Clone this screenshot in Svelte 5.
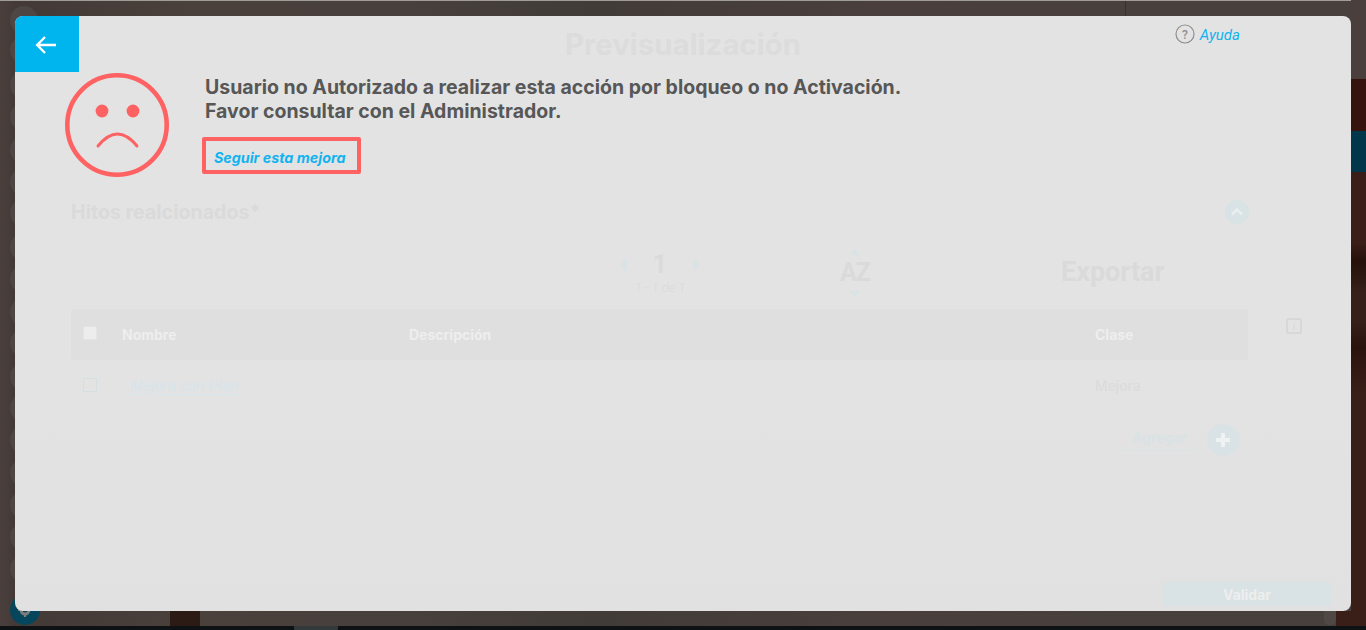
<script>
  const bubbles = [20, 50, 85, 117, 150, 182, 213, 247, 279, 312, 343, 377, 408, 440, 473, 505, 537, 569];
</script>

<div class="stage">
  <div class="backdrop" aria-hidden="true">
    <div class="topline"></div>
    <div class="divider"></div>
    {#each bubbles as y}
      <div class="bubble" style="top:{y - 14}px"></div>
    {/each}
    <div class="gear-badge">
      <svg viewBox="0 0 16 16" width="16" height="16"><circle cx="8" cy="8" r="4" fill="none" stroke="#7d7d7d" stroke-width="3" /><path d="M8 1v3M8 12v3M1 8h3M12 8h3" stroke="#7d7d7d" stroke-width="2" /></svg>
    </div>
    <div class="right-top"></div>
    <div class="right-red"></div>
    <div class="right-teal"></div>
    <div class="right-rest"></div>
    <div class="scroll-nub"></div>
    <div class="dark-col"></div>
    <div class="taskbar"><span class="task-item"></span></div>
  </div>

  <div class="modal">
    <header class="head">
      <button class="back" aria-label="Volver">
        <svg viewBox="0 0 24 20" width="24" height="20"><path d="M22 10H4M11 2 3.2 10l7.8 8" fill="none" stroke="#fff" stroke-width="2.4" /></svg>
      </button>
      <h1 class="ghost-title">Previsualización</h1>
      <div class="help">
        <svg viewBox="0 0 20 20" width="20" height="20"><circle cx="10" cy="10" r="9" fill="none" stroke="#8e8e8e" stroke-width="1.2" /><text x="10" y="14.5" text-anchor="middle" class="q">?</text></svg>
        <span>Ayuda</span>
      </div>
    </header>

    <section class="notice">
      <svg class="face" viewBox="0 0 104 104" width="104" height="104">
        <circle cx="52" cy="52" r="49.7" fill="none" stroke="#ff6262" stroke-width="4.6" />
        <circle cx="37" cy="38" r="6.4" fill="#ff6262" />
        <circle cx="68" cy="38" r="6.4" fill="#ff6262" />
        <path d="M33 73Q52.5 49 72 73" fill="none" stroke="#ff6262" stroke-width="3" stroke-linecap="round" />
      </svg>
      <div class="notice-body">
        <p>Usuario no Autorizado a realizar esta acción por bloqueo o no Activación.<br />Favor consultar con el Administrador.</p>
        <a class="follow" href="#follow">Seguir esta mejora</a>
      </div>
    </section>

    <div class="content">
      <section class="panel">
        <div class="panel-head">
          <h2>Hitos realcionados*</h2>
          <span class="collapse">
            <svg viewBox="0 0 24 24" width="24" height="24"><path d="M7 14.5 12 9.5l5 5" fill="none" stroke="#e9eeef" stroke-width="2.6" /></svg>
          </span>
        </div>
        <div class="toolbar">
          <div class="pager">
            <div class="pager-main"><i class="tri left"></i><b>1</b><i class="tri right"></i></div>
            <em>1 - 1 de 1</em>
          </div>
          <div class="sorter"><i class="tri up"></i><b>AZ</b><i class="tri down"></i></div>
          <div class="export">Exportar</div>
        </div>
        <div class="grid-row grid-head">
          <span class="check filled"></span>
          <span>Nombre</span>
          <span>Descripción</span>
          <span>Clase</span>
        </div>
        <div class="grid-row grid-body">
          <span class="check"></span>
          <a href="#plan">Mejora con Plan</a>
          <span></span>
          <span>Mejora</span>
        </div>
        <div class="add-row">
          <span class="add-label">Agregar</span>
          <span class="add-btn">
            <svg viewBox="0 0 32 32" width="32" height="32"><path d="M16 9v14M9 16h14" stroke="#eef2f3" stroke-width="4" /></svg>
          </span>
        </div>
      </section>
      <span class="info">i</span>
    </div>

    <footer class="foot">
      <button class="validate">Validar</button>
    </footer>
  </div>
</div>

<style>
  :global(body) {
    margin: 0;
    background: #0f1214;
  }
  .stage {
    position: relative;
    width: 1366px;
    height: 630px;
    box-sizing: border-box;
    padding: 16px 15px 19px;
    overflow: hidden;
    font-family: Inter, "Liberation Sans", sans-serif;
    background: linear-gradient(90deg, #4a3f3d 0, #433a37 15px, #4a403c 200px, #47403c 400px, #423c39 600px, #4a3f3c 900px, #48403d 1100px, #47403d 1366px);
  }
  .backdrop {
    position: absolute;
    inset: 0;
  }
  .topline {
    height: 1px;
    background: #a09c9a;
  }
  .divider {
    position: absolute;
    left: 1125px;
    top: 1px;
    width: 1px;
    height: 15px;
    background: #36302e;
  }
  .bubble {
    position: absolute;
    left: 10px;
    width: 28px;
    height: 28px;
    border-radius: 50%;
    background: #4e4644;
  }
  .gear-badge {
    position: absolute;
    left: 10px;
    top: 595px;
    width: 30px;
    height: 30px;
    border-radius: 50%;
    background: #05465c;
    display: flex;
    align-items: center;
    justify-content: center;
  }
  .right-top,
  .right-red,
  .right-teal,
  .right-rest {
    position: absolute;
    left: 1351px;
    width: 15px;
  }
  .right-top {
    top: 0;
    height: 79px;
    background: #4a3f3c;
  }
  .right-red {
    top: 79px;
    height: 52px;
    background: #36130d;
  }
  .right-teal {
    top: 131px;
    height: 41px;
    background: #02364a;
  }
  .right-rest {
    top: 172px;
    height: 454px;
    background: linear-gradient(180deg, #3b1e18 0, #3b1e18 70px, #25100a 90px, #37201a 120px, #38201a 150px, #2b130d 175px, #3a1f18 220px, #3a1f18 454px);
  }
  .scroll-nub {
    position: absolute;
    left: 1324px;
    top: 611px;
    width: 12px;
    height: 14px;
    border-radius: 0 0 5px 5px;
    background: #4f4845;
  }
  .dark-col {
    position: absolute;
    left: 170px;
    top: 611px;
    width: 30px;
    height: 15px;
    background: #2c1a15;
  }
  .backdrop::after {
    content: "";
    position: absolute;
    left: 1336px;
    top: 611px;
    width: 30px;
    height: 15px;
    background: #3a1f18;
  }
  .taskbar {
    position: absolute;
    left: 0;
    right: 0;
    top: 626px;
    height: 4px;
    background: #0f1214;
  }
  .task-item {
    display: block;
    margin-left: 294px;
    width: 44px;
    height: 4px;
    background: #33383b;
  }

  .modal {
    position: relative;
    height: 595px;
    display: flex;
    flex-direction: column;
    border-radius: 8px;
    overflow: hidden;
    background: linear-gradient(180deg, #e3e3e3 0, #e3e3e3 60%, #e1e1e1 100%);
  }
  .head {
    display: grid;
    grid-template-columns: 1fr auto 1fr;
    height: 56px;
  }
  .back {
    width: 64px;
    height: 56px;
    padding: 2px 2px 0 0;
    border: 0;
    background: #00b5ee;
    display: flex;
    align-items: center;
    justify-content: center;
  }
  .ghost-title {
    margin: 0;
    align-self: center;
    font-size: 29.4px;
    font-weight: 700;
    color: #dcdcdc;
  }
  .help {
    justify-self: end;
    display: flex;
    gap: 5px;
    align-items: center;
    height: 20px;
    margin-top: 8px;
    padding-right: 111px;
    font: italic 400 15px Roboto, sans-serif;
    color: #10b3ef;
  }
  .help span {
    margin-top: 1px;
  }
  .q {
    font: 500 12px Roboto, sans-serif;
    fill: #8e8e8e;
  }

  .notice {
    display: flex;
    gap: 36px;
    margin-top: 1px;
    padding-left: 50px;
    height: 104px;
  }
  .notice-body {
    display: flex;
    flex-direction: column;
    align-items: flex-start;
  }
  .notice p {
    margin: 2px 0 0;
    font-size: 19.5px;
    line-height: 24px;
    font-weight: 700;
    color: #575757;
    white-space: nowrap;
  }
  .follow {
    margin: 14px 0 0 -3px;
    box-sizing: border-box;
    width: 159px;
    height: 37px;
    padding-left: 8px;
    border: 4px solid #ff6262;
    border-radius: 2px;
    font-size: 14.3px;
    font-weight: 700;
    font-style: italic;
    line-height: 34px;
    color: #13b3ef;
    text-decoration: none;
  }

  .content {
    display: flex;
    margin: 9px 0 0 35px;
    gap: 17px;
    align-items: flex-start;
  }
  .panel {
    box-sizing: border-box;
    width: 1219px;
    height: 281px;
    flex: none;
    border: 1px solid #e2e2e2;
    border-radius: 4px;
  }
  .panel-head {
    display: flex;
    align-items: center;
    justify-content: space-between;
    height: 50px;
    padding: 0 19px 0 20px;
    border-bottom: 1px solid #e2e2e2;
  }
  .panel-head h2 {
    margin: 0;
    font-size: 19.6px;
    font-weight: 700;
    color: #dadada;
  }
  .collapse {
    width: 24px;
    height: 24px;
    border-radius: 50%;
    background: #d9e2e4;
    display: block;
  }
  .toolbar {
    display: flex;
    align-items: flex-start;
    height: 71px;
    padding-left: 569px;
    font-family: Roboto, sans-serif;
    color: #dadada;
  }
  .pager {
    width: 80px;
    display: flex;
    flex-direction: column;
    align-items: center;
    padding-top: 12px;
  }
  .pager-main {
    display: flex;
    align-items: center;
    justify-content: space-between;
    width: 80px;
    height: 30px;
    font-size: 25px;
    line-height: 30px;
  }
  .pager em {
    font-size: 13px;
    font-weight: 300;
    margin-top: 0;
    line-height: 15px;
  }
  .sorter {
    width: 80px;
    margin-left: 115px;
    display: flex;
    flex-direction: column;
    align-items: center;
    padding-top: 11px;
    gap: 4px;
    font-size: 25px;
    line-height: 28px;
  }
  .sorter b {
    letter-spacing: -1px;
    height: 28px;
  }
  .export {
    margin-left: 166px;
    padding-top: 20px;
    font-size: 27px;
    font-weight: 700;
    line-height: 28px;
  }
  .tri {
    display: block;
    width: 0;
    height: 0;
    border-style: solid;
    border-color: transparent;
  }
  .tri.left {
    border-width: 7px 7px 7px 0;
    border-right-color: #d9e2e4;
  }
  .tri.right {
    border-width: 7px 0 7px 7px;
    border-left-color: #d9e2e4;
  }
  .tri.up {
    border-width: 0 5px 6px;
    border-bottom-color: #d9e2e4;
  }
  .tri.down {
    border-width: 6px 5px 0;
    border-top-color: #d9e2e4;
  }
  .grid-row {
    display: grid;
    grid-template-columns: 51px 287px 686px 1fr;
    align-items: center;
    box-sizing: border-box;
    width: 1177px;
    margin-left: 20px;
    height: 51px;
    font-size: 14px;
  }
  .grid-head {
    border-radius: 3px;
    background: #dfdfdf;
    color: #eeeeee;
    font-weight: 700;
  }
  .grid-body {
    height: 50px;
    color: #dbdbdb;
  }
  .grid-body a {
    padding-left: 8px;
    justify-self: start;
    font: italic 400 15px "Liberation Sans", sans-serif;
    color: #d6e4ec;
    text-decoration: underline;
    text-underline-offset: 3px;
  }
  .check {
    box-sizing: border-box;
    width: 14px;
    height: 14px;
    margin: 0 0 0 12px;
    border: 1px solid #d3dfe1;
    border-radius: 1px;
  }
  .check.filled {
    margin-top: -4px;
    background: #ededed;
    border-color: #e4e4e4;
  }
  .add-row {
    display: flex;
    justify-content: flex-end;
    gap: 10px;
    align-items: center;
    margin: 14px 29px 0 0;
  }
  .add-label {
    box-sizing: border-box;
    width: 75px;
    height: 26px;
    margin-top: -4px;
    border-bottom: 1px solid #d9e2e4;
    text-align: center;
    font-size: 14px;
    font-weight: 700;
    line-height: 26px;
    color: #d9e2e4;
  }
  .add-btn {
    width: 32px;
    height: 32px;
    border-radius: 50%;
    background: #d9e2e4;
    display: block;
  }
  .info {
    box-sizing: border-box;
    width: 16px;
    height: 16px;
    margin-top: 132px;
    border: 2px solid #d8d8d8;
    border-radius: 2px;
    font: italic 400 11px/12px "Liberation Serif", serif;
    color: #d8d8d8;
    text-align: center;
  }
  .foot {
    margin-top: auto;
    display: flex;
    justify-content: flex-end;
    padding: 0 20px 5px 0;
  }
  .validate {
    width: 168px;
    height: 24px;
    padding: 0;
    border: 0;
    border-radius: 3px;
    background: #d9e2e4;
    color: #eeeeee;
    font: 700 14px Inter, sans-serif;
  }
</style>
